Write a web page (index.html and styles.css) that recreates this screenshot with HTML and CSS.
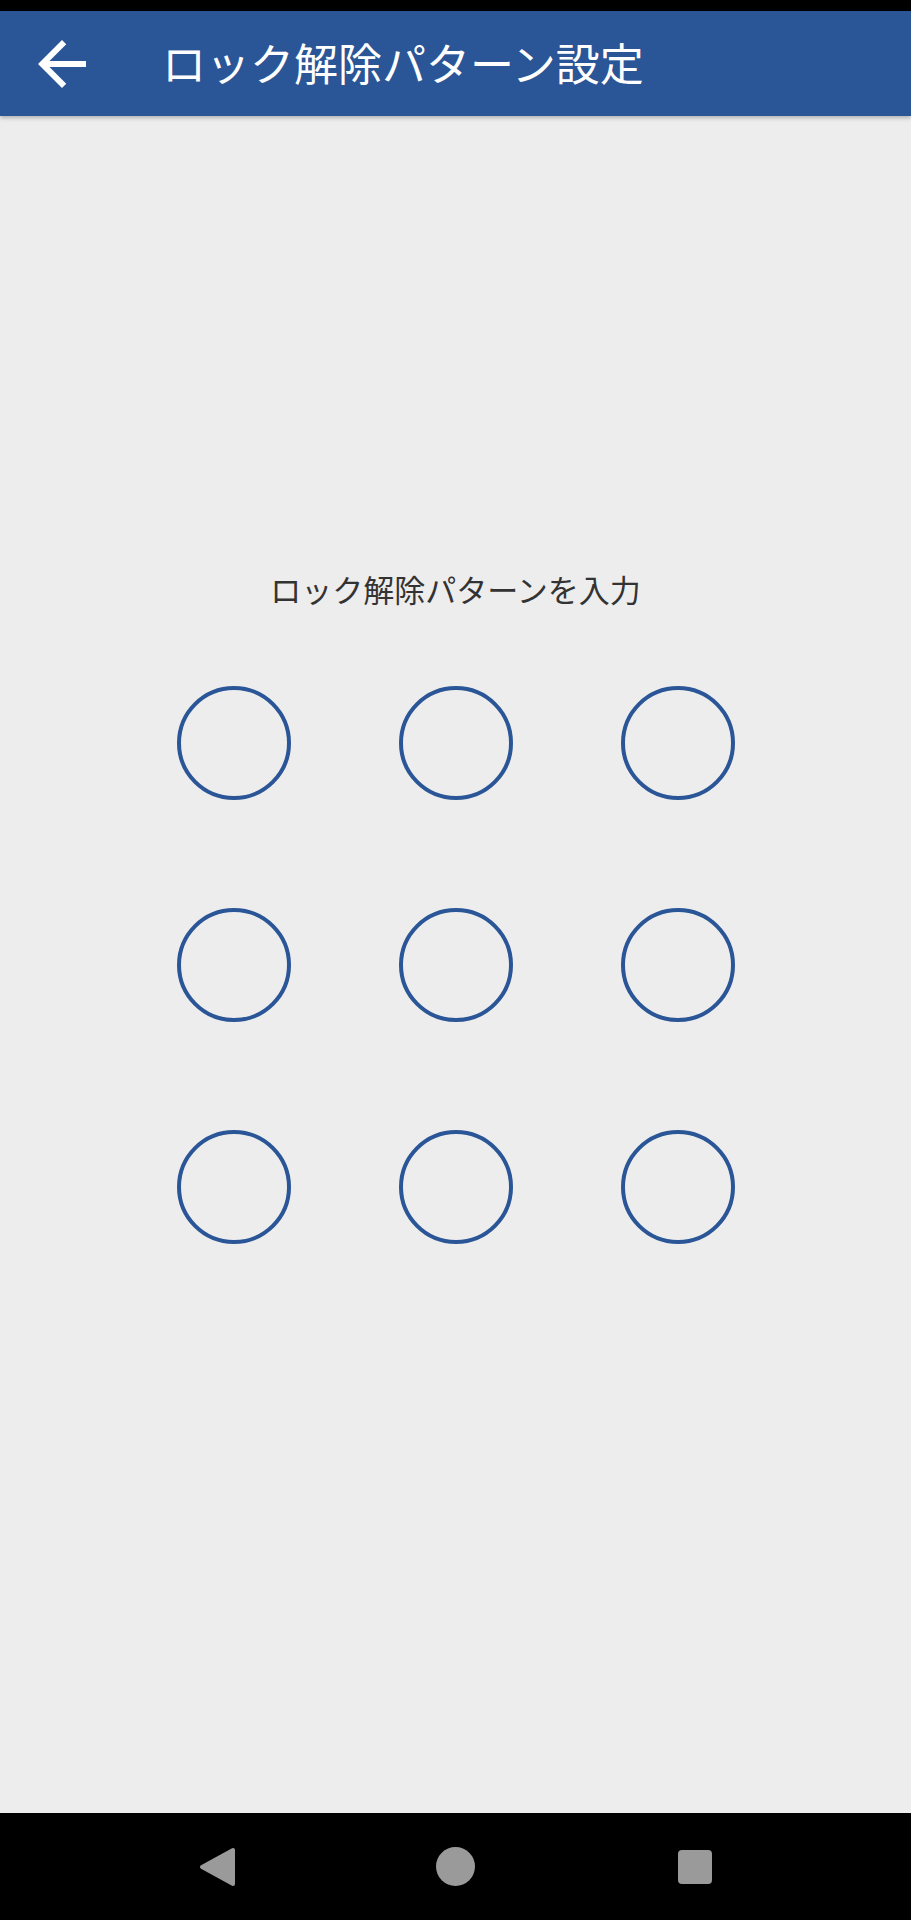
FILE: index.html
```html
<!DOCTYPE html>
<html lang="ja">
<head>
    <meta charset="UTF-8">
    <title>ロック解除パターン設定</title>
    <link rel="stylesheet" href="styles.css">
</head>
<body>
    <div class="screen">
        <div class="status-bar"></div>
        <div class="app-bar">
            <a class="back" href="javascript:;">
                <svg viewBox="0 0 24 24" width="72" height="72">
                    <path fill="#fff" d="M20 11H7.83l5.59-5.59L12 4l-8 8 8 8 1.41-1.41L7.83 13H20v-2z"/>
                </svg>
            </a>
            <h1 class="title">ロック解除パターン設定</h1>
        </div>
        <div class="main">
            <p class="hint">ロック解除パターンを入力</p>
            <ul class="pattern">
                <li></li>
                <li></li>
                <li></li>
                <li></li>
                <li></li>
                <li></li>
                <li></li>
                <li></li>
                <li></li>
            </ul>
        </div>
        <div class="nav-bar">
            <div class="nav-btn">
                <svg viewBox="0 0 48 48" width="48" height="48">
                    <path fill="#9a9a9a" stroke="#9a9a9a" stroke-width="4" stroke-linejoin="round" d="M9 24L40 7V41Z"/>
                </svg>
            </div>
            <div class="nav-btn">
                <span class="nav-home"></span>
            </div>
            <div class="nav-btn">
                <span class="nav-recent"></span>
            </div>
        </div>
    </div>
</body>
</html>
```

FILE: styles.css
```css
* {
    margin: 0;
    padding: 0;
    list-style: none;
    box-sizing: border-box;
}
body {
    font-family: "Noto Sans CJK JP", "Noto Sans", sans-serif;
    background: #000;
}
.screen {
    width: 911px;
    height: 1920px;
    display: flex;
    flex-direction: column;
}
.status-bar {
    height: 11px;
    background: #000;
}
.app-bar {
    height: 105px;
    background: #2a5597;
    display: flex;
    align-items: center;
    padding-left: 26px;
    box-shadow: 0 2px 4px rgba(0, 0, 0, 0.25);
    position: relative;
    z-index: 1;
}
.back {
    display: block;
    width: 72px;
    height: 72px;
}
.back svg {
    display: block;
}
.title {
    margin-left: 64px;
    margin-bottom: 4px;
    color: #fff;
    font-size: 44px;
    font-weight: 400;
    line-height: 1;
}
.main {
    flex: 1;
    background: #ededed;
    padding-top: 453px;
    display: flex;
    flex-direction: column;
    align-items: center;
}
.hint {
    font-size: 31px;
    line-height: 40px;
    color: #333;
}
.pattern {
    margin-top: 77px;
    display: grid;
    grid-template-columns: repeat(3, 114px);
    grid-auto-rows: 114px;
    gap: 108px;
}
.pattern li {
    border: 4px solid #2a5597;
    border-radius: 50%;
}
.nav-bar {
    height: 107px;
    background: #000;
    display: flex;
    justify-content: center;
    align-items: center;
    gap: 191px;
}
.nav-btn {
    width: 48px;
    height: 48px;
    display: flex;
    justify-content: center;
    align-items: center;
}
.nav-btn svg {
    display: block;
}
.nav-home {
    width: 39px;
    height: 39px;
    border-radius: 50%;
    background: #9a9a9a;
}
.nav-recent {
    width: 34px;
    height: 34px;
    border-radius: 4px;
    background: #9a9a9a;
}
```
